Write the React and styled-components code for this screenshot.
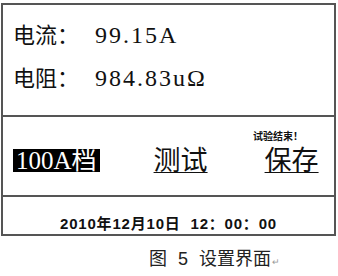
import React from "react";
import styled, { createGlobalStyle } from "styled-components";

const Global = createGlobalStyle`
  body {
    margin: 0;
    background: #fff;
  }
`;

const Page = styled.div`
  width: 338px;
  height: 276px;
  background: #fff;
  padding-top: 3px;
  box-sizing: border-box;
`;

const Screen = styled.div`
  margin-left: 1px;
  width: 335px;
  height: 233px;
  box-sizing: border-box;
  border: 2px solid #555;
  display: flex;
  flex-direction: column;
`;

const Section = styled.div`
  height: ${(p) => p.h}px;
  box-sizing: border-box;
  border-bottom: ${(p) => (p.last ? "none" : "2px solid #555")};
  position: relative;
`;

const Readings = styled(Section)`
  padding: 15px 0 0 10px;
  display: flex;
  flex-direction: column;
  gap: 17px;
`;

const Reading = styled.div`
  display: flex;
  align-items: baseline;
  height: 26px;
  color: #111;
`;

const Label = styled.span`
  font-family: "Noto Sans CJK SC", sans-serif;
  font-size: 22px;
  width: 82px;
  line-height: 26px;
`;

const Value = styled.span`
  font-family: "Liberation Serif", serif;
  font-size: 24px;
  letter-spacing: 2px;
  line-height: 26px;
`;

const Keys = styled(Section)`
  display: flex;
  align-items: flex-start;
  padding-top: 30px;
  padding-left: 10px;
`;

const Key = styled.span`
  font-family: "Liberation Serif", "Noto Sans CJK SC", serif;
  font-size: ${(p) => (p.active ? 25 : 27)}px;
  line-height: ${(p) => (p.active ? 23 : 28)}px;
  height: ${(p) => (p.active ? 23 : 28)}px;
  margin-left: ${(p) => p.gap}px;
  margin-top: ${(p) => (p.active ? 2 : 0)}px;
  padding: 0 ${(p) => (p.active ? 3 : 2)}px;
  color: ${(p) => (p.active ? "#fff" : "#111")};
  background: ${(p) => (p.active ? "#000" : "transparent")};
  text-decoration: ${(p) => (p.link ? "underline" : "none")};
  text-decoration-thickness: 1px;
  text-underline-offset: 2px;
`;

const Status = styled.span`
  position: absolute;
  left: 250px;
  top: 11px;
  font-family: "Noto Sans CJK SC", sans-serif;
  font-size: 10px;
  font-weight: 700;
  color: #111;
`;

const Clock = styled(Section)`
  display: flex;
  justify-content: center;
  align-items: center;
  padding-top: 14px;
  font-family: "Liberation Sans", "Noto Sans CJK SC", sans-serif;
  font-size: 15px;
  letter-spacing: 0.8px;
  font-weight: 700;
  color: #111;
`;

const Caption = styled.div`
  padding: 12px 0 0 149px;
  font-family: "Liberation Sans", "Noto Sans CJK SC", sans-serif;
  font-size: 18px;
  line-height: 22px;
  color: #222;
  display: flex;
  align-items: baseline;
`;

const Gap = styled.span`
  display: inline-block;
  width: ${(p) => p.w}px;
`;

const Mark = styled.span`
  font-size: 9px;
  color: #999;
  margin-left: 1px;
`;

export default function App() {
  return (
    <Page>
      <Global />
      <Screen>
        <Readings h={112}>
          <Reading>
            <Label>电流：</Label>
            <Value>99.15A</Value>
          </Reading>
          <Reading>
            <Label>电阻：</Label>
            <Value>984.83uΩ</Value>
          </Reading>
        </Readings>
        <Keys h={80}>
          <Status>试验结束！</Status>
          <Key active gap={0}>100A档</Key>
          <Key link gap={52}>测试</Key>
          <Key link gap={53}>保存</Key>
        </Keys>
        <Clock h={37} last>
          2010年12月10日&nbsp;&nbsp;12：00：00
        </Clock>
      </Screen>
      <Caption>
        图<Gap w={11} />5<Gap w={11} />设置界面<Mark>↵</Mark>
      </Caption>
    </Page>
  );
}
